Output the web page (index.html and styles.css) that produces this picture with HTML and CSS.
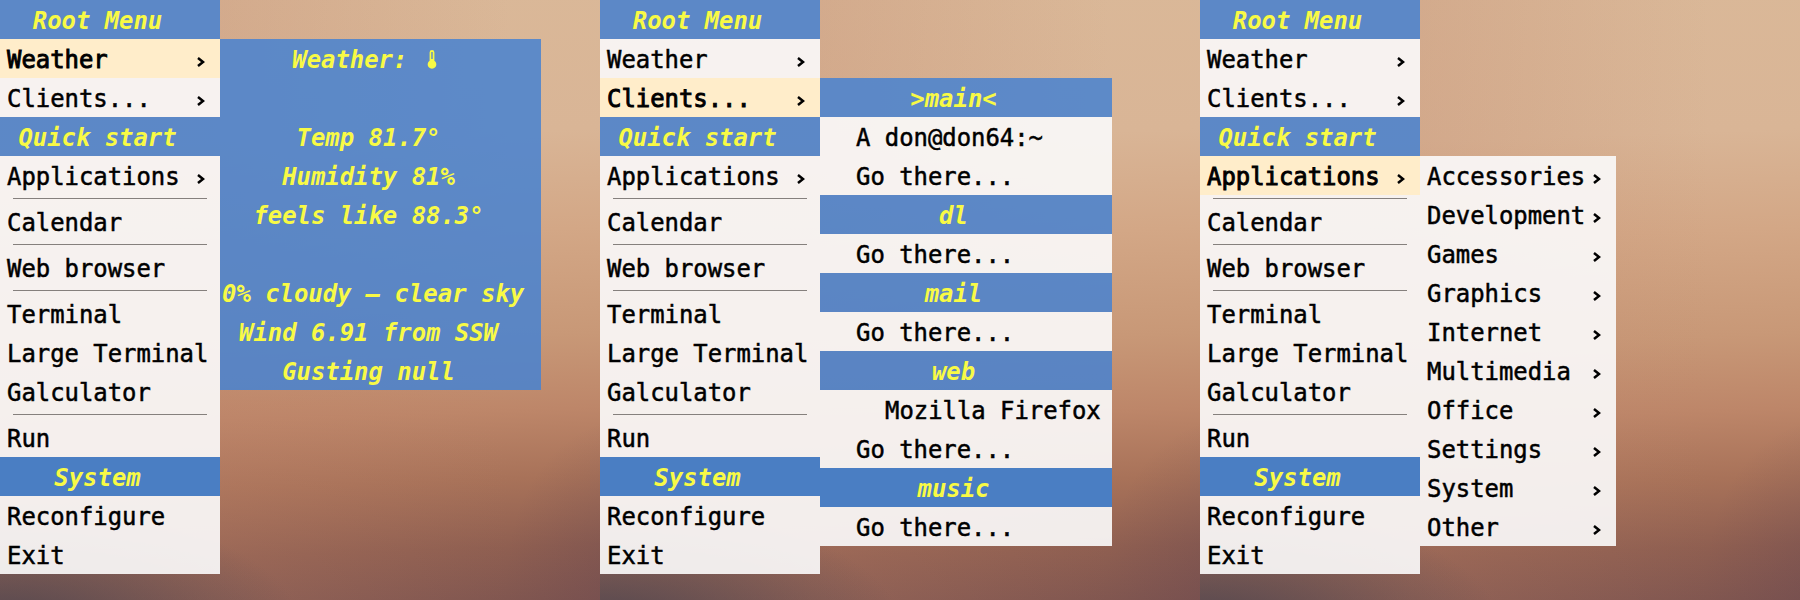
FILE: index.html
```
<!DOCTYPE html>
<html lang="en">
<head>
<meta charset="utf-8">
<title>Root Menu</title>
<link rel="stylesheet" href="styles.css">
</head>
<body>
<svg class="defs" aria-hidden="true">
  <symbol id="arrow" viewBox="0 0 8 10"><path d="M1 1 L6 5 L1 9" fill="none" stroke="currentColor" stroke-width="2.5"/></symbol>
</svg>
<main class="desktops">
  <section class="desktop">
    <div class="menu root">
      <div class="title">Root Menu</div>
      <div class="item active">Weather<svg class="arrow"><use href="#arrow"/></svg></div>
      <div class="item">Clients...<svg class="arrow"><use href="#arrow"/></svg></div>
      <div class="title">Quick start</div>
      <div class="item">Applications<svg class="arrow"><use href="#arrow"/></svg></div>
      <div class="sep"></div>
      <div class="item">Calendar</div>
      <div class="sep"></div>
      <div class="item">Web browser</div>
      <div class="sep"></div>
      <div class="item">Terminal</div>
      <div class="item">Large Terminal</div>
      <div class="item">Galculator</div>
      <div class="sep"></div>
      <div class="item">Run</div>
      <div class="title low">System</div>
      <div class="item">Reconfigure</div>
      <div class="item">Exit</div>
    </div>
    <div class="menu weather">
      <div class="title">Weather: <svg class="thermo" viewBox="0 0 23 20"><path d="M7.6 3.4a2.4 2.4 0 0 1 4.8 0v8.4a4.3 4.3 0 1 1-4.8 0z" fill="currentColor"/><path d="M10 3v7" stroke="#5d89c8" stroke-width="1.4"/></svg></div>
      <div class="title"></div>
      <div class="title">Temp 81.7°</div>
      <div class="title">Humidity 81%</div>
      <div class="title">feels like 88.3°</div>
      <div class="title"></div>
      <div class="title wide">0% cloudy – clear sky</div>
      <div class="title">Wind 6.91 from SSW</div>
      <div class="title">Gusting null</div>
    </div>
  </section>

  <section class="desktop">
    <div class="menu root">
      <div class="title">Root Menu</div>
      <div class="item">Weather<svg class="arrow"><use href="#arrow"/></svg></div>
      <div class="item active">Clients...<svg class="arrow"><use href="#arrow"/></svg></div>
      <div class="title">Quick start</div>
      <div class="item">Applications<svg class="arrow"><use href="#arrow"/></svg></div>
      <div class="sep"></div>
      <div class="item">Calendar</div>
      <div class="sep"></div>
      <div class="item">Web browser</div>
      <div class="sep"></div>
      <div class="item">Terminal</div>
      <div class="item">Large Terminal</div>
      <div class="item">Galculator</div>
      <div class="sep"></div>
      <div class="item">Run</div>
      <div class="title low">System</div>
      <div class="item">Reconfigure</div>
      <div class="item">Exit</div>
    </div>
    <div class="menu clients">
      <div class="title">&gt;main&lt;</div>
      <div class="item">A don@don64:~</div>
      <div class="item">Go there...</div>
      <div class="title">dl</div>
      <div class="item">Go there...</div>
      <div class="title">mail</div>
      <div class="item">Go there...</div>
      <div class="title">web</div>
      <div class="item window">Mozilla Firefox</div>
      <div class="item">Go there...</div>
      <div class="title low">music</div>
      <div class="item">Go there...</div>
    </div>
  </section>

  <section class="desktop">
    <div class="menu root">
      <div class="title">Root Menu</div>
      <div class="item">Weather<svg class="arrow"><use href="#arrow"/></svg></div>
      <div class="item">Clients...<svg class="arrow"><use href="#arrow"/></svg></div>
      <div class="title">Quick start</div>
      <div class="item active">Applications<svg class="arrow"><use href="#arrow"/></svg></div>
      <div class="sep"></div>
      <div class="item">Calendar</div>
      <div class="sep"></div>
      <div class="item">Web browser</div>
      <div class="sep"></div>
      <div class="item">Terminal</div>
      <div class="item">Large Terminal</div>
      <div class="item">Galculator</div>
      <div class="sep"></div>
      <div class="item">Run</div>
      <div class="title low">System</div>
      <div class="item">Reconfigure</div>
      <div class="item">Exit</div>
    </div>
    <div class="menu apps">
      <div class="item">Accessories<svg class="arrow"><use href="#arrow"/></svg></div>
      <div class="item">Development<svg class="arrow"><use href="#arrow"/></svg></div>
      <div class="item">Games<svg class="arrow"><use href="#arrow"/></svg></div>
      <div class="item">Graphics<svg class="arrow"><use href="#arrow"/></svg></div>
      <div class="item">Internet<svg class="arrow"><use href="#arrow"/></svg></div>
      <div class="item">Multimedia<svg class="arrow"><use href="#arrow"/></svg></div>
      <div class="item">Office<svg class="arrow"><use href="#arrow"/></svg></div>
      <div class="item">Settings<svg class="arrow"><use href="#arrow"/></svg></div>
      <div class="item">System<svg class="arrow"><use href="#arrow"/></svg></div>
      <div class="item">Other<svg class="arrow"><use href="#arrow"/></svg></div>
    </div>
  </section>
</main>
</body>
</html>
```
FILE: styles.css
```
* { box-sizing: border-box; }

body {
  margin: 0;
  font-family: "DejaVu Sans Mono", "Liberation Mono", monospace;
  font-size: 23.9px;
  line-height: 36px;
}

.defs { display: none; }

.desktops {
  display: grid;
  grid-template-columns: repeat(3, 600px);
  height: 600px;
}

.desktop {
  display: flex;
  align-items: flex-start;
  overflow: hidden;
  background:
    radial-gradient(ellipse 300px 120px at 0% 104%, rgba(62, 62, 76, .75), rgba(62, 62, 76, 0)),
    radial-gradient(ellipse 130px 160px at 106% 96%, rgba(92, 62, 78, .3), rgba(92, 62, 78, 0)),
    linear-gradient(90deg, rgba(190, 130, 105, .25) 35%, rgba(190, 130, 105, 0) 85%),
    linear-gradient(178deg, #dab898 0%, #d9b596 24%, #d3a786 40%, #c89877 57%, #bd8669 69%, #a87259 80%, #8f5f51 91%, #805650 100%);
}

.menu { flex: none; }
.root { width: 220px; }
.weather { width: 321px; margin-top: 39px; }
.clients { width: 292px; margin-top: 78px; }
.apps { width: 196px; margin-top: 156px; }

.title,
.item {
  display: flex;
  align-items: center;
  height: 39px;
  white-space: pre;
}

.title {
  justify-content: safe center;
  padding: 3px 25px 0 0;
  background: rgba(72, 130, 209, .86);
  color: #f8fa45;
  font-weight: bold;
  font-style: italic;
}
.title.low { background: #4a7ec3; }
.weather .title { padding-right: 24px; }
.weather .wide { padding: 3px 0 0 2px; justify-content: flex-start; }

.item {
  justify-content: space-between;
  padding: 3px 15px 0 7px;
  background: rgba(250, 248, 248, .92);
  color: #000;
  -webkit-text-stroke: .5px #000;
}
.item.active {
  background: #ffedca;
  -webkit-text-stroke: .9px #000;
}
.clients .item { padding-left: 36px; }
.clients .window { padding-left: 65px; padding-right: 0; }

.arrow { flex: none; width: 8px; height: 10px; margin-top: 3px; }
.thermo { flex: none; width: 23px; height: 20px; margin-top: -3px; }

.sep {
  height: 7px;
  padding: 3px 13px;
  background: rgba(250, 248, 248, .92);
}
.sep::before {
  content: "";
  display: block;
  height: 1px;
  background: #85807d;
}
```
